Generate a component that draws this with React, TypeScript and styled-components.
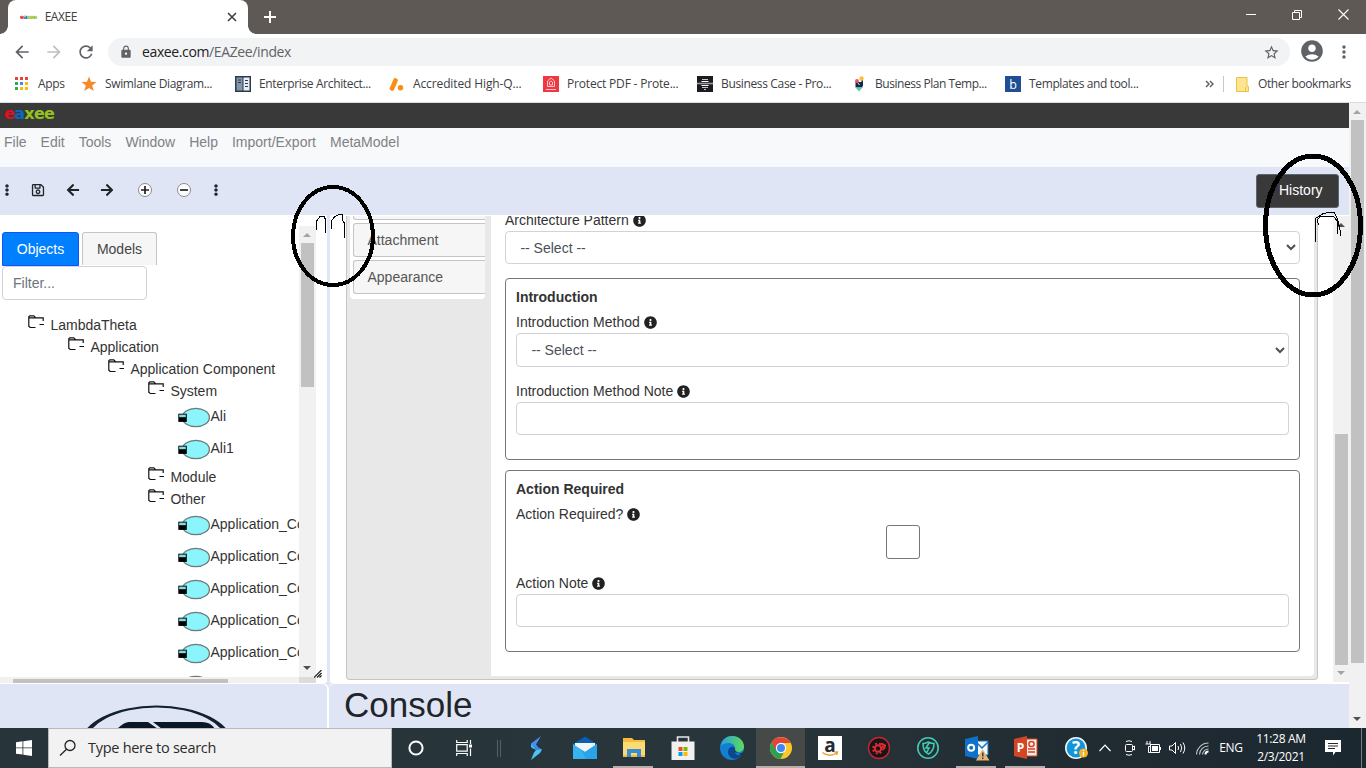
import React from "react";
import styled, { createGlobalStyle } from "styled-components";
import { FaArrowLeft, FaArrowRight, FaEllipsisV, FaInfoCircle, FaRegSave } from "react-icons/fa";
import { MdArrowBack, MdArrowForward, MdRefresh, MdLock, MdStarBorder, MdAccountCircle, MdMoreVert } from "react-icons/md";

const Global = createGlobalStyle`
  * { box-sizing: border-box; }
  body { margin: 0; overflow: hidden; font-family: "Liberation Sans", Arial, sans-serif; font-size: 14px; color: #333; }
  svg { display: block; flex: none; }
`;

const ui = `"Open Sans", "Noto Sans", sans-serif`;
const lilac = "#e0e5f5";

const Screen = styled.div`
  width: 1366px; height: 768px; display: flex; flex-direction: column;
  overflow: hidden; position: relative; background: #fff;
`;

/* ---------- browser chrome ---------- */
const TabStrip = styled.div`
  height: 34px; background: #5e5955; display: flex; padding-left: 8px; flex: none;
`;
const Tab = styled.div`
  width: 240px; height: 34px; background: #fff; border-radius: 8px 8px 0 0; position: relative;
  display: flex; align-items: center; padding: 0 11px 0 12px;
  &::before, &::after {
    content: ""; position: absolute; bottom: 0; width: 8px; height: 8px;
  }
  &::before { left: -8px; background: radial-gradient(circle at 0 0, transparent 7.5px, #fff 8px); }
  &::after { right: -8px; background: radial-gradient(circle at 100% 0, transparent 7.5px, #fff 8px); }
`;
const Label = styled.span<{ $size?: number; $ls?: number; $color?: string }>`
  font-family: ${ui}; font-size: ${p => p.$size ?? 12}px; letter-spacing: ${p => p.$ls ?? -0.3}px;
  color: ${p => p.$color ?? "#3c4043"}; white-space: nowrap; line-height: 16px;
`;
const TabTitle = styled(Label)`margin-left: 8px; flex: 1;`;
const NewTab = styled.div`padding: 11px 0 0 16px; flex: 1;`;
const WindowButtons = styled.div`
  display: flex; width: 138px; height: 29px; > * { width: 46px; display: flex; justify-content: center; align-items: center; }
`;
const AddressRow = styled.div`height: 36px; display: flex; align-items: center; flex: none; padding-left: 12px; color: #5f6368;`;
const NavIcon = styled.div<{ $dim?: boolean }>`width: 32px; opacity: ${p => (p.$dim ? 0.4 : 1)};`;
const Omnibox = styled.div`
  width: 1182px; height: 28px; border-radius: 14px; background: #f1f3f4; display: flex; align-items: center;
  padding: 0 10px 0 11px;
`;
const Url = styled(Label)`margin-left: 9px; flex: 1; b { font-weight: 400; color: #202124; }`;
const Bookmarks = styled.div`
  height: 33px; border-bottom: 1px solid #dadce0; display: flex; align-items: center; flex: none; padding: 0 14px 4px 14px;
`;
const Apps = styled.div`width: 67px; display: flex; align-items: center; gap: 9px;`;
const Bookmark = styled.div`width: 154px; display: flex; align-items: center; gap: 8px;`;
const BookmarkTail = styled.div`display: flex; align-items: center; margin-left: 46px;`;
const OtherLabel = styled(Label)`margin-left: 9px;`;
const Divider = styled.div`width: 1px; height: 16px; background: #c6c8cb; margin: 0 12px 0 9px;`;

/* ---------- page ---------- */
const Viewport = styled.div`height: 625px; display: flex; flex: none;`;
const Page = styled.div`width: 1349px; display: flex; flex-direction: column;`;
const Brand = styled.div`height: 25px; background: #393939; padding-left: 4px;`;
const Wordmark = styled.div<{ $size: number; $ls: number; $lh: number }>`
  font: 700 ${p => p.$size}px/${p => p.$lh}px "DejaVu Sans", sans-serif; letter-spacing: ${p => p.$ls}px;
  color: #95c11f; white-space: nowrap;
  span { color: #e30f1a; } i { color: #0a68c0; font-style: normal; }
`;
const MenuBar = styled.div`
  height: 39px; background: #f8f9fb; display: flex; gap: 14px; padding: 3px 4px 0; line-height: 22px; color: #808184;
`;
const ToolBar = styled.div`
  height: 48px; background: ${lilac}; display: flex; align-items: center; color: #212529; padding-right: 10px;
`;
const Tool = styled.div<{ $w: number }>`width: ${p => p.$w}px; display: flex; justify-content: center; align-items: center; height: 100%; padding-bottom: 2px;`;
const HistoryButton = styled.button`
  margin-left: auto; width: 83px; height: 34px; background: #393939; border: 1px solid #5d666e; border-radius: 3px;
  color: #fff; font: 14px "Liberation Sans", sans-serif; display: flex; align-items: center; padding: 0 0 2px 11px; gap: 5px;
`;
const Work = styled.div`height: 469px; display: flex; position: relative;`;
const LeftPane = styled.div`width: 327px; display: flex; flex-direction: column; background: #fff;`;
const LeftScroll = styled.div`height: 462px; display: flex;`;
const LeftContent = styled.div`width: 299px; overflow: hidden; padding-top: 17px;`;
const TabRow = styled.div`display: flex; padding-left: 2px; gap: 3px; height: 34px;`;
const PaneTab = styled.div<{ $on?: boolean }>`
  width: ${p => (p.$on ? 77 : 75)}px; height: ${p => (p.$on ? 34 : 33)}px; text-align: center; line-height: 32px;
  border: 1px solid ${p => (p.$on ? "#1153ff" : "#c5c5c5")}; border-bottom-width: ${p => (p.$on ? 1 : 0)}px;
  border-radius: 3px 3px 0 0; background: ${p => (p.$on ? "#007fff" : "#f6f6f6")}; color: ${p => (p.$on ? "#fff" : "#454545")};
`;
const Filter = styled.input`
  display: block; width: 145px; height: 34px; margin: 0 0 14px 2px; padding: 0 10px; border: 1px solid #ced4da; border-radius: 4px;
  font: 14px "Liberation Sans", sans-serif; &::placeholder { color: #6c757d; opacity: 1; }
`;
const Folder = styled.div<{ $depth: number }>`
  height: 22px; line-height: 22px; display: flex; gap: 5.4px; padding-left: ${p => 28 + p.$depth * 40}px; white-space: nowrap;
  svg { margin-top: 1px; }
`;
const Leaf = styled.div`
  height: 32px; line-height: 28px; display: flex; gap: 0.5px; padding-left: 178px; white-space: nowrap; svg { margin-top: 5px; }
`;
const Gutter = styled.div<{ $w: number; $mt?: number; $h?: number }>`
  width: ${p => p.$w}px; margin-top: ${p => p.$mt ?? 0}px; height: ${p => (p.$h ? p.$h + "px" : "auto")};
  background: #f1f1f1; display: flex; flex-direction: column; padding: 0 2px; flex: none;
`;
const Thumb = styled.div<{ $h: number; $mt: number }>`
  width: 13px; height: ${p => p.$h}px; margin-top: ${p => p.$mt}px; background: #c1c1c1; flex: none;
`;
const Caret = styled.div<{ $down?: boolean; $mt: number; $color: string }>`
  width: 0; height: 0; margin: ${p => p.$mt}px 0 0 2px; border: 4px solid transparent; flex: none;
  border-${p => (p.$down ? "top" : "bottom")}: 4px solid ${p => p.$color};
  border-${p => (p.$down ? "bottom" : "top")}-width: 0;
`;
const HBar = styled.div`
  height: 6px; width: 316px; background: linear-gradient(90deg, #f1f1f1 299px, #dcdcdc 299px);
  padding: 2px 0 0 13px; > div { width: 215px; height: 4px; background: #c1c1c1; }
`;
const Grip = styled.svg`position: absolute; left: 314px; top: 455px;`;
const Splitter = styled.div`width: 3px; background: ${lilac};`;
const Star = styled.svg`position: absolute; left: 322px; top: 463px;`;
const RightPane = styled.div`width: 1019px; padding: 1px 0 0 16px; display: flex; background: #fff;`;
const Panel = styled.div`
  width: 972px; height: 464px; background: #e8e8e8; border: 1px solid #c5c5c5; border-top: 0; border-radius: 0 0 4px 4px;
  display: flex; overflow: hidden; padding: 0 3px 3px; margin-right: 15px;
`;
const SideNav = styled.div`
  width: 135px; height: 83px; background: #fff; border-radius: 0 0 4px 4px; padding-left: 3px; overflow: hidden; margin-right: 6px;
`;
const SideItem = styled.div<{ $cut?: boolean }>`
  height: 34px; margin-top: ${p => (p.$cut ? -30 : 3)}px; line-height: 32px; padding-left: 13.5px; color: #555; background: #f6f6f6;
  border: 1px solid #c5c5c5; border-right: 0; border-radius: 3px 0 0 3px;
`;
const Form = styled.div`flex: 1; background: #fff; padding: 0 14px; overflow: hidden; border-radius: 0 0 4px 0;`;
const FieldLabel = styled.div<{ $mt?: number }>`
  height: 21px; line-height: 21px; margin-top: ${p => p.$mt ?? 0}px; display: flex; align-items: center; gap: 4px; color: #333;
  svg { margin-bottom: 1px; }
`;
const Select = styled.select<{ $h: number }>`
  display: block; width: 100%; height: ${p => p.$h}px; padding: 0 0 0 10.4px; border: 1px solid #ced4da; border-radius: 4px;
  background: #fff; color: #495057; font: 14px "Liberation Sans", sans-serif;
`;
const Input = styled.input`display: block; width: 100%; height: 33px; border: 1px solid #ced4da; border-radius: 4px;`;
const Group = styled.section<{ $mt: number }>`
  height: 182px; margin-top: ${p => p.$mt}px; border: 1px solid #777; border-radius: 4px; padding: 8px 10px 0;
`;
const GroupTitle = styled.div`height: 21px; line-height: 21px; font-weight: 700; margin-bottom: 4px;`;
const Check = styled.div`width: 34px; height: 34px; margin: 0 auto; border: 1px solid #767676; border-radius: 3px;`;
const Bottom = styled.div`height: 44px; display: flex; gap: 2px;`;
const LogoPane = styled.div`width: 327px; background: ${lilac}; border-radius: 0 5px 0 0; padding-left: 80px; overflow: hidden;`;
const Console = styled.div`
  flex: 1; background: ${lilac}; border-radius: 5px 0 0 0; font-size: 35px; line-height: 42px; padding-left: 15px; color: #212529;
`;

/* ---------- task bar ---------- */
const TaskBar = styled.div`
  height: 40px; display: flex; background: linear-gradient(90deg, #27343a 0, #28353a 55%, #202b32 80%, #1c2830 100%); flex: none;
`;
const TaskCell = styled.div<{ $w?: number; $active?: boolean; $open?: boolean }>`
  width: ${p => p.$w ?? 49}px; flex: none; display: flex; align-items: center; justify-content: center; position: relative;
  background: ${p => (p.$active ? "#454948" : "none")};
  &::after {
    content: ""; position: absolute; bottom: 0; height: 2px; background: #b9adab;
    left: ${p => (p.$active ? 0 : 4)}px; right: ${p => (p.$active ? 0 : 5)}px; display: ${p => (p.$open ? "block" : "none")};
  }
`;
const SearchBox = styled.div`
  width: 344px; flex: none; background: #f2f2f2; border: 1px solid #b9b9b9; display: flex; align-items: center; padding-left: 10px; gap: 11px;
`;
const Tray = styled.div`flex: 1; display: flex; align-items: center; padding-left: 13px;`;
const TrayItem = styled.div<{ $w: number }>`width: ${p => p.$w}px; flex: none; display: flex; justify-content: center;`;
const Clock = styled.div`width: 68px; flex: none; text-align: center; display: flex; flex-direction: column; > span { line-height: 18px; }`;
const Edge = styled.div`width: 1px; height: 40px; background: #727a7e; margin-left: 10px;`;

const Ink = styled.svg`position: absolute; left: 0; top: 0; pointer-events: none;`;

const FolderIcon = () => (
  <svg width="17" height="14" viewBox="0 0 17 14" fill="none" stroke="#111" strokeWidth="1.2">
    <path d="M7.500 12.500H2.200L.8 11.200V1.800L1.800.8h4l2 2h7.400v3.200M1 2.800h7M11.500 9.500h4.500" />
  </svg>
);
const ComponentIcon = () => (
  <svg width="32" height="21" viewBox="0 0 32 21">
    <ellipse cx="17.8" cy="10.5" rx="13.6" ry="9.2" fill="#8cf4fb" stroke="#6a7b7b" strokeWidth="1.3" />
    <rect x=".3" y="6.7" width="8.5" height="8.2" fill="#000" />
    <rect x="1.2" y="7.6" width="6.6" height="2.6" fill="#7fdde4" />
  </svg>
);
const Info = () => <FaInfoCircle size={13} color="#222" />;
const RoundTool = ({ plus }: { plus?: boolean }) => (
  <svg width="16" height="16" viewBox="0 0 16 16">
    <circle cx="8" cy="8" r="6.5" fill="#fff" stroke="#8a8a8a" />
    <path d={plus ? "M4 8h8M8 4v8" : "M4 8h8"} stroke="#222" strokeWidth="1.7" />
  </svg>
);

const BookmarkIcon = ({ kind }: { kind: number }) => (
  <svg width="16" height="16" viewBox="0 0 16 16">
    {kind === 0 && <path d="M8 .5l2 5.300 5.500.2-4.300 3.500 1.600 5.500L8 12l-4.700 3 1.500-5.500L.5 6 6 5.800z" fill="#f58a2a" />}
    {kind === 1 && <>
      <rect width="16" height="16" fill="#2b3b4b" /><rect x="1.5" y="1.5" width="6" height="13" fill="#8397a8" /><rect x="8.5" y="1.5" width="6" height="13" fill="#e9eef2" />
      <path d="M3 4h3M3 6.500h3M10 4.500h3M10 7.500h3M10 10.500h3" stroke="#2b3b4b" />
    </>}
    {kind === 2 && <><path d="M3 12.500L6.500 4.500" stroke="#fb8c14" strokeWidth="4.600" strokeLinecap="round" /><circle cx="11.500" cy="11.800" r="2.700" fill="#fb8c14" /></>}
    {kind === 3 && <>
      <rect width="16" height="16" fill="#ee3943" /><path d="M4.500 10.500V5L8 2l3.500 3v5.500zM6.500 9V6l1.500-1 1.500 1v3zM3 13.500h10" fill="none" stroke="#ffc5c8" />
    </>}
    {kind === 4 && <><rect width="16" height="16" fill="#1b1c20" /><path d="M5 3.500h6M5 11.500h6M7 13.500h2" stroke="#c5c6c9" /><path d="M0 7.500h16" stroke="#9a9ba0" strokeWidth="1.600" /><path d="M4.500 5.500h7M4.500 9.500h7" stroke="#fff" strokeWidth="1.200" /></>}
    {kind === 5 && <>
      <path d="M4.500 6h7v5.500h-7z" fill="#14284a" /><path d="M4.500 11.500h7L8 15.500z" fill="#5cc9b4" /><circle cx="6" cy="5" r="2" fill="#ef5562" /><circle cx="10.500" cy="2.500" r="2.200" fill="#fbbf3a" />
      <path d="M10.500 4.500h1.500V10h-1.500z" fill="#14284a" /><path d="M7 7l1.500 2" stroke="#dcebf5" />
    </>}
    {kind === 6 && <><rect width="16" height="16" fill="#1f4e93" /><text x="8" y="12.500" fill="#fff" fontSize="12.500" fontFamily="Open Sans" textAnchor="middle">b</text></>}
  </svg>
);
const bookmarks: [string, number][] = [
  ["Swimlane Diagram...", -0.36], ["Enterprise Architect...", -0.35], ["Accredited High-Q...", -0.12], ["Protect PDF - Prote...", -0.18],
  ["Business Case - Pro...", -0.35], ["Business Plan Temp...", -0.45], ["Templates and tool...", -0.36],
];
const dots = ["#ea4335", "#ea4335", "#ea4335", "#34a853", "#4285f4", "#fbbc05", "#34a853", "#fbbc05", "#fbbc05"];

const TaskIcon = ({ kind }: { kind: string }) => (
  <svg width="26" height="26" viewBox="0 0 26 26">
    {kind === "bolt" && <><path d="M18 1L8 8.500l2 5.500 5-2-2-2.500z" fill="#4a8cf5" /><path d="M8 9l11 5.500-2 3.500L8 25l3-7.500 2-2.500-5-3z" fill="#4fc3f5" /><path d="M8 9l5 6 6-.5z" fill="#2a8ee8" /></>}
    {kind === "mail" && <><path d="M1 9l12-7.500L25 9v5H1z" fill="#0b5eb0" /><path d="M3 8h20v10H3z" fill="#f2f5f8" /><path d="M1 9l12 8 12-8v15H1z" fill="#36b4f0" /><path d="M25 9v15H14L9 14.500l4 2.500z" fill="#2aa3e8" /></>}
    {kind === "files" && <><path d="M2 3h9l2 2h11v17H2z" fill="#f5bd3a" /><path d="M2 7h22v13H2z" fill="#fbdc72" /><path d="M6 22v-8h14v8h-4v-4h-6v4z" fill="#3a8bd8" /></>}
    {kind === "store" && <><path d="M7.500 7V2h11v5" fill="none" stroke="#e8e8e8" strokeWidth="1.600" /><path d="M1.500 6.500h23V25h-23z" fill="#f1f1f1" /><path d="M8.500 12h4v4h-4z" fill="#f04f23" /><path d="M13.500 12h4v4h-4z" fill="#7fba00" /><path d="M8.500 17h4v4h-4z" fill="#00a3ee" /><path d="M13.500 17h4v4h-4z" fill="#ffb900" /></>}
    {kind === "edge" && <>
      <defs><linearGradient id="eg"><stop offset="0" stopColor="#2a9fe0" /><stop offset="1" stopColor="#5ddc55" /></linearGradient></defs>
      <circle cx="13" cy="13" r="12" fill="#137fd0" /><path d="M1.500 11C3 4 8 1 13 1c7 0 12 5 12 10.500 0 4-3 5.500-6 5.500-3.500 0-3.500-1.500-3-3 .5-4-3-6-6.500-6-4 0-7 2-8 3z" fill="url(#eg)" />
      <path d="M16 13c-3-3-7 0-7 4 0 4 4 7.500 9 6.500 2-.5 4-2 5.500-4-3 1.500-8 .5-8-3.500z" fill="#0b478f" /><path d="M16.200 13.500c-.6 2 .5 3.500 3 3.500-1 1-3.700.7-4.200-1z" fill="#27363b" />
      <path d="M20 18.500q3 0 5-2.500v5l-2 1z" fill="#27343a" />
    </>}
    {kind === "chrome" && <>
      <circle cx="13" cy="13" r="11" fill="#fbc926" /><path d="M3.400 7.600A11 11 0 0 0 12.500 24L17 15l-8 0z" fill="#2fa050" /><path d="M3.400 7.600L8.500 15.500 13 8h9.600A11 11 0 0 0 3.400 7.600z" fill="#e2453a" />
      <circle cx="13" cy="13" r="5.200" fill="#fff" /><circle cx="13" cy="13" r="4" fill="#4285f4" />
    </>}
    {kind === "amazon" && <><rect x="1" y="1" width="24" height="24" fill="#fff" /><text x="13" y="17" textAnchor="middle" fontSize="19" fontWeight="700" fontFamily="Open Sans" fill="#222b36">a</text><path d="M5.500 17.500c4 3.500 10 3.500 14 .5M17.500 17h3l-1 3" fill="none" stroke="#f6a032" strokeWidth="1.500" /></>}
    {kind === "gear" && <><circle cx="13" cy="13" r="10.500" fill="#16151a" stroke="#c9252c" strokeWidth="1.400" /><circle cx="12" cy="13.500" r="3.200" fill="none" stroke="#e42a31" strokeWidth="2" /><circle cx="12" cy="13.500" r="5" fill="none" stroke="#e42a31" strokeWidth="1.800" strokeDasharray="2 2" /><path d="M15 8.500l4 2-1 3.500" stroke="#e42a31" strokeWidth="2" fill="none" /></>}
    {kind === "shield" && <g fill="none" stroke="#42c9b3" strokeWidth="1.600"><circle cx="13" cy="13" r="10.200" /><path d="M8 8.500c3 0 4-1 5-1.500 2 1 3 1.500 6 1.500 0 5-1 8-5.500 10.500C9 17 8 13 8 8.500zM14 8l-3 5h3l-2 4" /></g>}
    {kind === "outlook" && <>
      <path d="M12 6h12v14H12z" fill="#f4f8fc" stroke="#1272c4" /><path d="M12 7l6 6 6-6" stroke="#1272c4" fill="none" strokeWidth="1.500" /><path d="M1 4l13-3v23L1 21z" fill="#0f71c8" /><circle cx="7.200" cy="12.700" r="3" fill="none" stroke="#fff" strokeWidth="2" />
      <path d="M18.500 14l7 11.500H12z" fill="#e6b474" /><path d="M18.800 17.500v4M18.800 22.500v1.500" stroke="#333" strokeWidth="1.400" />
    </>}
    {kind === "ppt" && <>
      <path d="M12 4h12v17H12z" fill="#fbe9e4" stroke="#d24625" /><path d="M15 14h7M15 17h7" stroke="#d24625" strokeWidth="1.300" /><circle cx="18.500" cy="9" r="2.600" fill="none" stroke="#d24625" strokeWidth="1.500" /><path d="M1 4l13-3v23L1 21z" fill="#d24625" />
      <text x="7.500" y="17" textAnchor="middle" fontSize="12" fontWeight="700" fontFamily="Open Sans" fill="#fff">P</text>
    </>}
  </svg>
);
const tasks: [string, boolean, boolean][] = [
  ["bolt", false, false], ["mail", false, false], ["files", true, false], ["store", false, false], ["edge", false, false], ["chrome", true, true],
  ["amazon", false, false], ["gear", false, false], ["shield", false, false], ["outlook", true, false], ["ppt", true, false],
];

const Eaxee = (p: { size: number; ls: number; lh: number }) => (
  <Wordmark $size={p.size} $ls={p.ls} $lh={p.lh}><span>e</span><i>a</i>xee</Wordmark>
);

export default function App() {
  return (
    <Screen>
      <Global />
      <TabStrip>
        <Tab>
          <Eaxee size={6} ls={-0.7} lh={32} />
          <TabTitle $ls={-0.45}>EAXEE</TabTitle>
          <svg width="10" height="10" viewBox="0 0 10 10" stroke="#3c4043" strokeWidth="1.6"><path d="M1 1l8 8M9 1L1 9" /></svg>
        </Tab>
        <NewTab><svg width="12" height="12" viewBox="0 0 12 12" stroke="#fff" strokeWidth="2"><path d="M0 6h12M6 0v12" /></svg></NewTab>
        <WindowButtons>
          <div><svg width="10" height="10" stroke="#fff"><path d="M0 4.500h10" /></svg></div>
          <div><svg width="10" height="10" fill="none" stroke="#fff"><path d="M.5 2.500h7v7h-7zM2.500 2.500v-2h7v7h-2" /></svg></div>
          <div><svg width="11" height="11" stroke="#fff" strokeWidth="1.100"><path d="M.5.5l10 10M10.500.5l-10 10" /></svg></div>
        </WindowButtons>
      </TabStrip>
      <AddressRow>
        <NavIcon><MdArrowBack size={20} /></NavIcon>
        <NavIcon $dim><MdArrowForward size={20} /></NavIcon>
        <NavIcon><MdRefresh size={20} /></NavIcon>
        <Omnibox>
          <MdLock size={14} />
          <Url $size={14} $ls={-0.38} $color="#5f6368"><b>eaxee.com</b>/EAZee/index</Url>
          <MdStarBorder size={17} />
        </Omnibox>
        <Tool $w={44}><MdAccountCircle size={26} /></Tool>
        <MdMoreVert size={20} />
      </AddressRow>
      <Bookmarks>
        <Apps>
          <svg width="15" height="14">{dots.map((c, i) => <rect key={i} x={1 + (i % 3) * 5} y={Math.floor(i / 3) * 5} width="3" height="3" fill={c} />)}</svg>
          <Label>Apps</Label>
        </Apps>
        {bookmarks.map(([b, ls], i) => <Bookmark key={b}><BookmarkIcon kind={i} /><Label $ls={ls}>{b}</Label></Bookmark>)}
        <BookmarkTail>
          <svg width="9" height="8" fill="none" stroke="#5f6368" strokeWidth="1.500"><path d="M1 1l3 3-3 3M5 1l3 3-3 3" /></svg>
          <Divider />
          <svg width="13" height="15"><path d="M.5.500h10.500v9h1.500v5H.5z" fill="#ffe592" stroke="#e8c442" /><path d="M9.500 14v-4" stroke="#e8c442" /></svg>
          <OtherLabel $ls={-0.38}>Other bookmarks</OtherLabel>
        </BookmarkTail>
      </Bookmarks>

      <Viewport>
        <Page>
          <Brand><Eaxee size={16} ls={-0.7} lh={22} /></Brand>
          <MenuBar>{["File", "Edit", "Tools", "Window", "Help", "Import/Export", "MetaModel"].map(m => <span key={m}>{m}</span>)}</MenuBar>
          <ToolBar>
            <Tool $w={14}><FaEllipsisV size={12} /></Tool>
            <Tool $w={47}><FaRegSave size={14} /></Tool>
            <Tool $w={23}><FaArrowLeft size={14} /></Tool>
            <Tool $w={46}><FaArrowRight size={14} /></Tool>
            <Tool $w={30}><RoundTool plus /></Tool>
            <Tool $w={48}><RoundTool /></Tool>
            <Tool $w={16}><FaEllipsisV size={12} /></Tool>
            <HistoryButton><svg width="6" height="8" fill="none" stroke="#fff"><path d="M5 1L2 4l3 3" /></svg>History</HistoryButton>
          </ToolBar>
          <Work>
            <LeftPane>
              <LeftScroll>
                <LeftContent>
                  <TabRow><PaneTab $on>Objects</PaneTab><PaneTab>Models</PaneTab></TabRow>
                  <Filter placeholder="Filter..." />
                  <Folder $depth={0}><FolderIcon />LambdaTheta</Folder>
                  <Folder $depth={1}><FolderIcon />Application</Folder>
                  <Folder $depth={2}><FolderIcon />Application Component</Folder>
                  <Folder $depth={3}><FolderIcon />System</Folder>
                  <Leaf><ComponentIcon />Ali</Leaf>
                  <Leaf><ComponentIcon />Ali1</Leaf>
                  <Folder $depth={3}><FolderIcon />Module</Folder>
                  <Folder $depth={3}><FolderIcon />Other</Folder>
                  {[0, 1, 2, 3, 4, 5].map(i => <Leaf key={i}><ComponentIcon />{i < 5 && "Application_Component"}</Leaf>)}
                </LeftContent>
                <Gutter $w={17} $mt={11}>
                  <Caret $mt={7} $color="#a3a3a3" /><Thumb $mt={6} $h={144} /><Caret $down $mt={279} $color="#505050" />
                </Gutter>
              </LeftScroll>
              <HBar><div /></HBar>
            </LeftPane>
            <Splitter />
            <RightPane>
              <Panel>
                <SideNav><SideItem $cut /><SideItem>Attachment</SideItem><SideItem>Appearance</SideItem></SideNav>
                <Form>
                  <FieldLabel $mt={-6}>Architecture Pattern <Info /></FieldLabel>
                  <Select $h={33}><option>-- Select --</option></Select>
                  <Group $mt={14}>
                    <GroupTitle>Introduction</GroupTitle>
                    <FieldLabel>Introduction Method <Info /></FieldLabel>
                    <Select $h={34}><option>-- Select --</option></Select>
                    <FieldLabel $mt={14}>Introduction Method Note <Info /></FieldLabel>
                    <Input />
                  </Group>
                  <Group $mt={10}>
                    <GroupTitle>Action Required</GroupTitle>
                    <FieldLabel>Action Required? <Info /></FieldLabel>
                    <Check />
                    <FieldLabel $mt={14}>Action Note <Info /></FieldLabel>
                    <Input />
                  </Group>
                </Form>
              </Panel>
              <Gutter $w={16} $h={466}>
                <Caret $mt={7} $color="#505050" /><Thumb $mt={207} $h={231} /><Caret $down $mt={6} $color="#a3a3a3" />
              </Gutter>
            </RightPane>
            <Grip width="8" height="8" stroke="#222" strokeWidth="1.2"><path d="M0 7.500L7.500 0M3 7.500L7.500 3M5.500 7.500l2-2" /></Grip>
            <Star width="13" height="12"><path d="M6.500 0C7 4 8 5 12 5.500 8 6 7 7 6.500 12 6 7 5 6 1 5.500 5 5 6 4 6.500 0z" fill={lilac} /></Star>
          </Work>
          <Bottom>
            <LogoPane>
              <svg width="153" height="44" viewBox="80 684 153 44">
                <path fillRule="evenodd" d="M80.500 744a76 38.500 0 0 1 152 0a76 38.500 0 0 1-152 0M85.500 744.500a71 37 0 0 1 142 0a71 37 0 0 1-142 0" fill="#12202f" />
                <path d="M117 729q7-7 12-7h19l10 7zM153 722h49q9 0 13 7h-53z" fill="#0a1724" />
              </svg>
            </LogoPane>
            <Console>Console</Console>
          </Bottom>
        </Page>
        <Gutter $w={17}>
          <Caret $mt={7} $color="#a3a3a3" /><Thumb $mt={6} $h={543} /><Caret $down $mt={54} $color="#505050" />
        </Gutter>
      </Viewport>

      <TaskBar>
        <TaskCell $w={48}><svg width="16" height="16" fill="#fff"><path d="M0 2.200l6.500-.9v6.200H0zM7.300 1.200L16 0v7.500H7.300zM0 8.300h6.500v6.300L0 13.700zM7.300 8.300H16V16l-8.700-1.200z" /></svg></TaskCell>
        <SearchBox>
          <svg width="18" height="18" fill="none" stroke="#222" strokeWidth="1.300"><circle cx="11" cy="6.500" r="5" /><path d="M7.500 10.200L1 16.500" /></svg>
          <Label $size={14.5} $ls={-0.28} $color="#2b2b2b">Type here to search</Label>
        </SearchBox>
        <TaskCell $w={48}><svg width="16" height="16"><circle cx="8" cy="8" r="6.600" fill="none" stroke="#fff" strokeWidth="2" /></svg></TaskCell>
        <TaskCell $w={48}><svg width="17" height="16" fill="none" stroke="#fff" strokeWidth="1.200"><path d="M.7 0v2.500h10.500V0M.7 16v-2.500h10.500V16M.7 4.700h10.500v6.500H.7zM14.500 0v4M14.500 8.500V16" /><path d="M13 4.500h3v3h-3z" fill="#fff" stroke="none" /></svg></TaskCell>
        <TaskCell $w={23}><svg width="5" height="17" stroke="#55605f"><path d="M.5 0v17M3.500 0v17" /></svg></TaskCell>
        {tasks.map(([k, open, active]) => <TaskCell key={k} $open={open} $active={active}><TaskIcon kind={k} /></TaskCell>)}
        <Tray>
          <TrayItem $w={28}><svg width="24" height="24"><circle cx="11" cy="12" r="10.200" fill="#1294d8" stroke="#f0f6fa" strokeWidth="1.600" /><text x="11" y="18" textAnchor="middle" fontSize="17" fontWeight="700" fontFamily="Open Sans" fill="#fff">?</text><circle cx="18.500" cy="17" r="4.500" fill="#f3b32a" /><path d="M18.500 14v1M18.500 16v4" stroke="#fff" strokeWidth="1.200" /></svg></TrayItem>
          <TrayItem $w={28}><svg width="12" height="8" fill="none" stroke="#fff" strokeWidth="1.200"><path d="M.5 7L6 1.200 11.500 7" /></svg></TrayItem>
          <TrayItem $w={22}><svg width="12" height="16" fill="none" stroke="#fff"><rect x="1.500" y="4.500" width="7" height="7" rx="1" /><path d="M8.500 7l2-1v4l-2-1M2 1.500Q5 0 8 1.500M2 14.500Q5 16 8 14.500" /></svg></TrayItem>
          <TrayItem $w={24}><svg width="17" height="14" fill="none" stroke="#fff"><path d="M5.500 3.500h9v8h-9zM15.500 6v3M2 0v3M5 0v3M.5 3h5v2.500h-2v6h2" /><path d="M7 5h6v5H7z" fill="#fff" stroke="none" /></svg></TrayItem>
          <TrayItem $w={24}><svg width="17" height="14" fill="none" stroke="#fff"><path d="M.5 5h2.500l3.500-3.500v11L3 9H.5zM9 5q1.200 2 0 4M11.500 3q2.500 4 0 8M14 1.500q3.500 5.500 0 11" /></svg></TrayItem>
          <TrayItem $w={26}><svg width="13" height="13" fill="none" stroke="#fff" strokeWidth="1.100"><path d="M.5 12.500A12 12 0 0 1 12.500 1M3.500 12.500a9 9 0 0 1 9-8.500M6.500 12.500a6 6 0 0 1 6-5.500" opacity=".75" /><path d="M9.500 12.500a3 3 0 0 1 3-3" strokeWidth="2" /></svg></TrayItem>
          <TrayItem $w={32}><Label $color="#fff">ENG</Label></TrayItem>
          <Clock><Label $color="#fff">11:28 AM</Label><Label $color="#fff">2/3/2021</Label></Clock>
          <TrayItem $w={36}><svg width="16" height="16"><path d="M0 0h16v12H10.500L8 15.500V12H0z" fill="#fff" /><path d="M3 3.500h10M3 6h10M3 8.500h7" stroke="#202b32" /></svg></TrayItem>
          <Edge />
        </Tray>
      </TaskBar>

      <Ink width="1366" height="768" fill="none" stroke="#000" shapeRendering="crispEdges">
        <ellipse cx="333" cy="236" rx="40" ry="49" strokeWidth="4" />
        <ellipse cx="1313" cy="225.500" rx="47.500" ry="69.500" strokeWidth="5" />
        <path d="M316.500 230v-9l3.500-4.500h4l1.500 3v13M331.500 229v-8l3-4 4-2.500h4l.5 6.500 1.500 2v14.500M1315.500 241.500v-23l7-4.500 5-1.500h7l3 7 2 8 1.500 8M1318.500 225.500l-1-6 3-3.500h13l4 5.500V234" />
      </Ink>
    </Screen>
  );
}
